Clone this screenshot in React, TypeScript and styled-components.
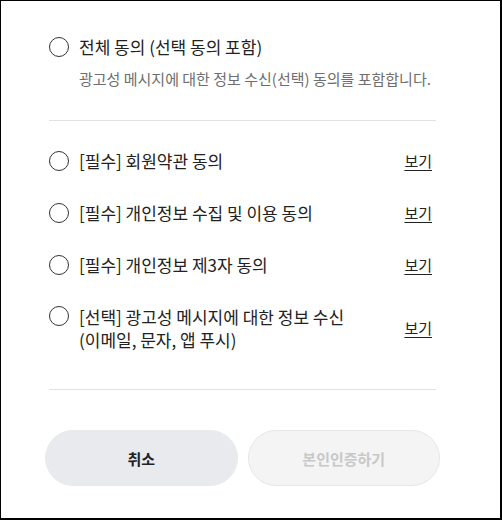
import React from "react";
import styled, { createGlobalStyle } from "styled-components";

const GlobalStyle = createGlobalStyle`
  html, body { margin: 0; padding: 0; background: #fff; }
  body {
    font-family: "Noto Sans CJK KR", "Noto Sans", sans-serif;
    color: #222;
  }
  * { box-sizing: border-box; }
`;

const Frame = styled.div`
  width: 502px;
  height: 520px;
  border: 1px solid #000;
  border-right-width: 2px;
  border-bottom-width: 2px;
  padding-top: 34px;
  display: flex;
  flex-direction: column;
`;

const Section = styled.section`
  padding: 0 64px 0 48px;
`;

const AgreeRow = styled.label<{ $top?: boolean }>`
  display: flex;
  align-items: ${(p) => (p.$top ? "flex-start" : "center")};
  gap: 10px;
  cursor: pointer;
`;

const Radio = styled.span<{ $offset?: number }>`
  flex: none;
  width: 20px;
  height: 20px;
  border: 1.5px solid #333;
  border-radius: 50%;
  background: #fff;
  margin-top: ${(p) => p.$offset ?? 0}px;
`;

const Title = styled.span`
  font-size: 17px;
  line-height: 24px;
  color: #222;
`;

const Sub = styled.p`
  margin: 10px 0 0 30px;
  font-size: 15px;
  line-height: 20px;
  color: #6e6e6e;
`;

const Divider = styled.hr<{ $mt: number }>`
  margin: ${(p) => p.$mt}px 64px 0 48px;
  border: 0;
  height: 1px;
  background: #e2e2e2;
`;

const List = styled.ul`
  list-style: none;
  margin: 0;
  padding: 28px 68px 0 48px;
  display: flex;
  flex-direction: column;
  gap: 28px;
`;

const Item = styled.li`
  display: flex;
  align-items: center;
  justify-content: space-between;
  gap: 12px;
`;

const ItemText = styled.span<{ $multi?: boolean }>`
  font-size: 17px;
  line-height: ${(p) => (p.$multi ? 23 : 24)}px;
  color: #222;
`;

const ViewLink = styled.a`
  flex: none;
  font-size: 15px;
  line-height: 20px;
  color: #222;
  text-decoration: underline;
  text-underline-offset: 3px;
  cursor: pointer;
`;

const Buttons = styled.div`
  margin-top: 40px;
  padding: 0 60px 0 44px;
  display: grid;
  grid-template-columns: 1fr 1fr;
  gap: 10px;
`;

const Button = styled.button<{ $disabled?: boolean }>`
  height: 56px;
  border-radius: 28px;
  font-family: inherit;
  font-size: 15px;
  font-weight: 700;
  border: 1px solid ${(p) => (p.$disabled ? "#e6e6e6" : "#e9eaee")};
  background: ${(p) => (p.$disabled ? "#f4f4f4" : "#e9eaee")};
  color: ${(p) => (p.$disabled ? "#c8c8c8" : "#222")};
  cursor: ${(p) => (p.$disabled ? "default" : "pointer")};
`;

const items: { text: React.ReactNode; multi?: boolean }[] = [
  { text: "[필수] 회원약관 동의" },
  { text: "[필수] 개인정보 수집 및 이용 동의" },
  { text: "[필수] 개인정보 제3자 동의" },
  {
    text: (
      <>
        [선택] 광고성 메시지에 대한 정보 수신
        <br />
        (이메일, 문자, 앱 푸시)
      </>
    ),
    multi: true,
  },
];

export default function App() {
  return (
    <>
      <GlobalStyle />
      <Frame>
        <Section>
          <AgreeRow>
            <Radio />
            <Title>전체 동의 (선택 동의 포함)</Title>
          </AgreeRow>
          <Sub>광고성 메시지에 대한 정보 수신(선택) 동의를 포함합니다.</Sub>
        </Section>
        <Divider $mt={31} />
        <List>
          {items.map((it, i) => (
            <Item key={i}>
              <AgreeRow $top={it.multi}>
                <Radio $offset={it.multi ? 1 : 0} />
                <ItemText $multi={it.multi}>{it.text}</ItemText>
              </AgreeRow>
              <ViewLink>보기</ViewLink>
            </Item>
          ))}
        </List>
        <Divider $mt={38} />
        <Buttons>
          <Button>취소</Button>
          <Button $disabled disabled>
            본인인증하기
          </Button>
        </Buttons>
      </Frame>
    </>
  );
}
